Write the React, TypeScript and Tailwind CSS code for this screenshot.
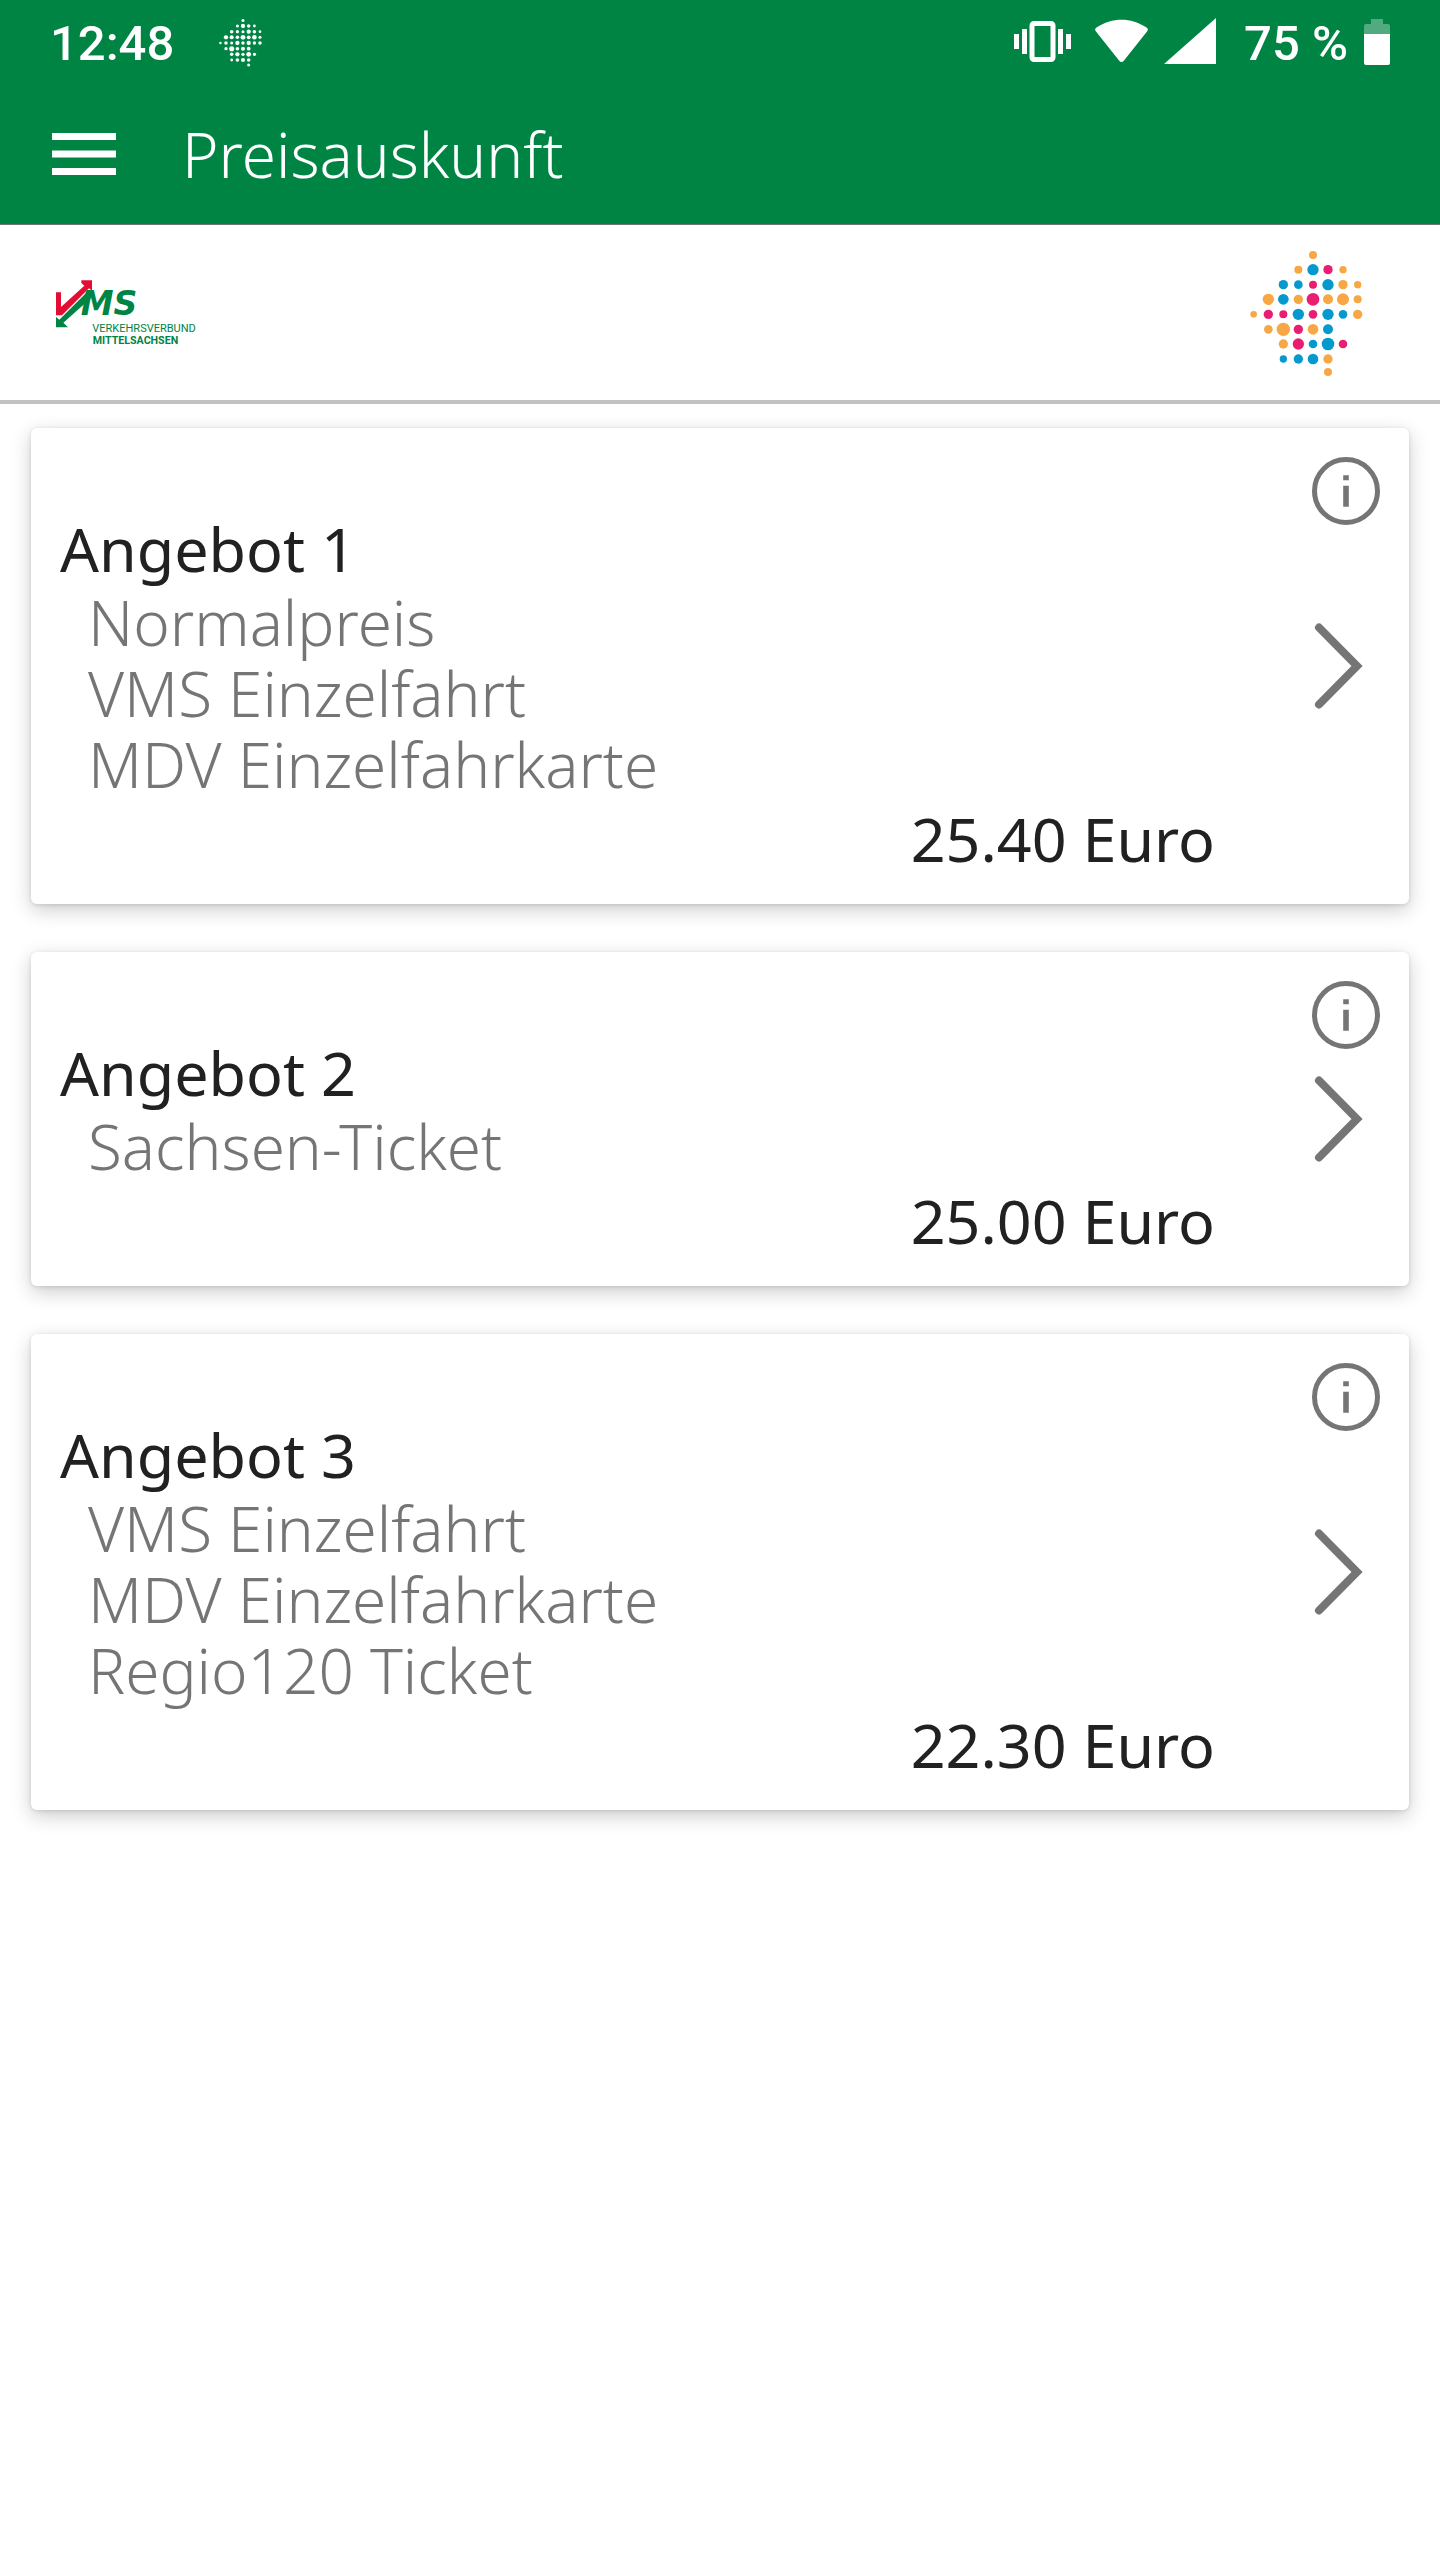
import React from 'react';

interface Offer {
  title: string;
  tickets: string[];
  price: string;
}

const offers: Offer[] = [
  {
    title: 'Angebot 1',
    tickets: ['Normalpreis', 'VMS Einzelfahrt', 'MDV Einzelfahrkarte'],
    price: '25.40 Euro',
  },
  {
    title: 'Angebot 2',
    tickets: ['Sachsen-Ticket'],
    price: '25.00 Euro',
  },
  {
    title: 'Angebot 3',
    tickets: ['VMS Einzelfahrt', 'MDV Einzelfahrkarte', 'Regio120 Ticket'],
    price: '22.30 Euro',
  },
];

const ORANGE = '#f7a844';
const BLUE = '#0599ce';
const PINK = '#e91e73';

// [x, y, radius, color]
const dots: [number, number, number, string][] = [
  [249, 60, 12, ORANGE],
  [205, 104, 12, ORANGE],
  [249, 104, 17, BLUE],
  [294, 104, 14, PINK],
  [339, 104, 11, ORANGE],
  [160, 149, 14, BLUE],
  [205, 149, 13, BLUE],
  [249, 149, 12, PINK],
  [294, 149, 17, BLUE],
  [339, 149, 14, ORANGE],
  [383, 149, 11, ORANGE],
  [115, 193, 17, ORANGE],
  [160, 193, 16, BLUE],
  [205, 193, 14, ORANGE],
  [249, 193, 19, PINK],
  [294, 193, 15, ORANGE],
  [339, 193, 18, ORANGE],
  [383, 193, 12, ORANGE],
  [71, 238, 10, ORANGE],
  [115, 238, 14, PINK],
  [160, 238, 12, PINK],
  [205, 238, 17, BLUE],
  [249, 238, 13, PINK],
  [294, 238, 17, BLUE],
  [339, 238, 13, BLUE],
  [383, 238, 14, ORANGE],
  [115, 283, 13, ORANGE],
  [160, 283, 20, ORANGE],
  [205, 283, 14, PINK],
  [249, 283, 16, ORANGE],
  [294, 283, 15, BLUE],
  [160, 327, 14, ORANGE],
  [205, 327, 17, PINK],
  [249, 327, 13, BLUE],
  [294, 327, 19, BLUE],
  [339, 327, 13, PINK],
  [160, 372, 11, BLUE],
  [205, 372, 14, BLUE],
  [249, 372, 16, BLUE],
  [294, 372, 14, ORANGE],
  [294, 411, 12, ORANGE],
];

const DotMap: React.FC<{ className: string; color?: string }> = ({ className, color }) => (
  <svg viewBox="60 42 339 384" className={className} aria-hidden="true">
    {dots.map(([x, y, r, fill]) => (
      <circle key={`${x}-${y}`} cx={x} cy={y} r={r} fill={color ?? fill} />
    ))}
  </svg>
);

const VmsLogo = () => (
  <svg viewBox="0 8 540 300" className="h-[100px] w-[180px]" role="img" aria-label="VMS">
    <path
      d="M48 96H63V140L133 76L124 68V60H156V91L147 84L66 165H48Z"
      fill="#e30d34"
    />
    <path
      d="M48 170L58 178L139 97H156L154 112L70 187L84 201H48Z"
      fill="#008444"
    />
    <g fill="#008444">
      <text
        x="122"
        y="165"
        className='font-["DejaVu_Sans",sans-serif] text-[99px] font-bold italic'
      >
        MS
      </text>
      <text x="157" y="216" className="font-[Roboto,sans-serif] text-[33px] font-normal">
        VERKEHRSVERBUND
      </text>
      <text x="158" y="251" className="font-[Roboto,sans-serif] text-[32px] font-bold">
        MITTELSACHSEN
      </text>
    </g>
  </svg>
);

const StatusBar = () => (
  <div className="flex h-[88px] items-center px-[50px] font-[Roboto,sans-serif] text-[49px] font-medium text-white">
    <span>12:48</span>
    <DotMap className="mb-1 ml-[45px] h-[49px] w-[43px]" color="#ffffff" />

    <div className="ml-auto flex items-center" aria-hidden="true">
      {/* vibrate */}
      <svg viewBox="0 19 57 50" className="h-[50px] w-[57px] fill-current">
        <path d="M0 34h5v15H0zM8 29h5v25H8zM44 29h5v25h-5zM52 34h5v15h-5z" />
        <rect x="18" y="23.5" width="21" height="36" rx="2" fill="none" stroke="currentColor" strokeWidth="5" />
      </svg>
      {/* wifi */}
      <svg viewBox="0 19 53 50" className="ml-6 h-[50px] w-[53px] fill-current">
        <path d="M1 31.5Q-1 29 1.500 27.500C17 17 36 17 51.500 27.500Q54 29 52 31.500L29 60.500Q26.500 63.500 24 60.500Z" />
      </svg>
      {/* signal */}
      <svg viewBox="0 19 52 50" className="ml-4 h-[50px] w-[52px] overflow-visible fill-current">
        <path d="M0 64L52 18V64Z" />
      </svg>
    </div>
    <span className="ml-7">75 %</span>
    <svg viewBox="0 19 26 50" className="ml-4 h-[50px] w-[26px] fill-current" aria-hidden="true">
      <path d="M7 19h12v5h5q2 0 2 2v8H0v-8q0-2 2-2h5z" opacity="0.32" />
      <path d="M0 34h26v29q0 2-2 2H2q-2 0-2-2z" />
    </svg>
  </div>
);

const OfferCard: React.FC<{ offer: Offer }> = ({ offer }) => (
  <article className="flex rounded-md bg-white px-[29px] shadow-[0_6px_20px_rgba(0,0,0,0.20),0_1px_4px_rgba(0,0,0,0.12)]">
    <div className="flex-1 pt-[83px] pb-[29px] text-[61px] text-[#212121]">
      <h2 className="leading-[76px]">{offer.title}</h2>
      <ul className="pl-7 text-[62px] leading-[71px] font-light text-[#757575]">
        {offer.tickets.map((ticket) => (
          <li key={ticket}>{ticket}</li>
        ))}
      </ul>
      <p className="mt-[3px] text-right leading-[72px]">{offer.price}</p>
    </div>

    {/* Actions */}
    <div className="ml-[97px] grid grid-rows-[1fr_auto_1fr] py-[29px] text-[#757575]">
      <button className="self-start" aria-label={`Info ${offer.title}`}>
        <svg viewBox="0 0 68 68" className="block size-[68px]">
          <circle cx="34" cy="34" r="31.500" fill="none" stroke="currentColor" strokeWidth="5" />
          <path d="M31.200 18.300h5.600v5h-5.600zM31.200 28.800h5.600v21h-5.600z" fill="currentColor" />
        </svg>
      </button>
      <button aria-label={`${offer.title} öffnen`}>
        <svg viewBox="0 0 68 86" className="block h-[86px] w-[68px]">
          <path
            d="M7 4.500L45 43L7 81.500"
            fill="none"
            stroke="currentColor"
            strokeWidth="8"
            strokeLinecap="round"
          />
        </svg>
      </button>
    </div>
  </article>
);

export default function App() {
  return (
    <div className='min-h-screen bg-white font-["Noto_Sans",sans-serif]'>
      <header className="border-b border-[#757575] bg-[#008444]">
        <StatusBar />
        <div className="flex h-[136px] items-center px-[52px] pb-1 text-white">
          <button aria-label="Menü">
            <svg viewBox="0 0 64 42" className="block h-[42px] w-16 fill-current">
              <path d="M0 0h64v7H0zM0 17.500h64v7H0zM0 35h64v7H0z" />
            </svg>
          </button>
          <h1 className="ml-[66px] text-[62px] leading-[72px] font-light">Preisauskunft</h1>
        </div>
      </header>

      <div className="flex h-[179px] items-center justify-between border-b-4 border-[#c1c1c1] pr-[77px] pl-10">
        <VmsLogo />
        <DotMap className="h-[128px] w-[113px]" />
      </div>

      <main className="flex flex-col gap-12 px-[31px] pt-6 pb-12">
        {offers.map((offer) => (
          <OfferCard key={offer.title} offer={offer} />
        ))}
      </main>
    </div>
  );
}
